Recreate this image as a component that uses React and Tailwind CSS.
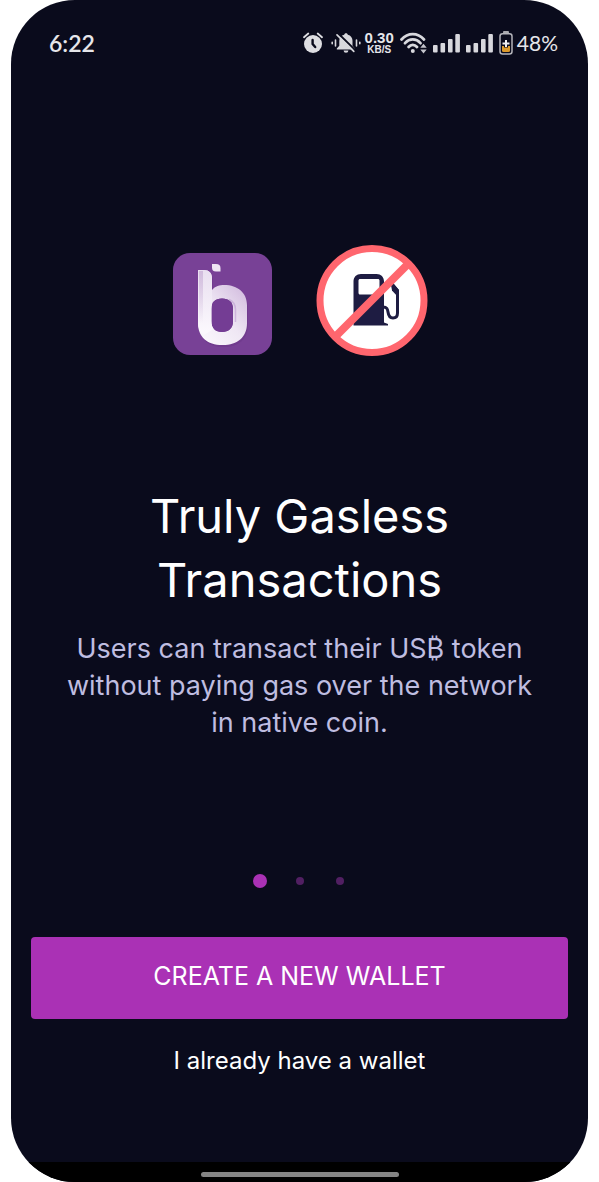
import React from "react";

function AlarmIcon() {
  return (
    <svg className="h-[22px] w-[20px]" viewBox="0 0 20 22" fill="none" aria-hidden="true">
      <circle cx="10" cy="12" r="9" fill="#dedee2" />
      <path d="M1 5.2 5.3 1.5M19 5.2 14.7 1.5" stroke="#dedee2" strokeWidth="1.8" strokeLinecap="round" />
      <path d="M9.600 8v4l2.600 3" stroke="#0a0b1c" strokeWidth="2.4" strokeLinecap="round" strokeLinejoin="round" />
    </svg>
  );
}

function BellOffIcon() {
  return (
    <svg className="h-[22px] w-[30px]" viewBox="0 0 30 22" aria-hidden="true">
      <path
        d="M15 1.2c1 0 1.7.7 1.8 1.6 3 .8 4.7 3 4.7 6v5l2.3 2.6v1.2H5.8v-1.2l2.5-2.6v-5c0-3 1.9-5.200 4.900-6C13.300 1.900 14 1.200 15 1.200zM12.600 18.600h4.800a2.400 2.200 0 0 1-4.800 0z"
        fill="#d8d8dd"
      />
      <path d="M7.500 1.800 24.500 18.400" stroke="#0a0b1c" strokeWidth="2" />
      <path d="M6 2.800 22.800 19.300" stroke="#d8d8dd" strokeWidth="1.700" strokeLinecap="round" />
      <path d="M4.500 8v6M25.500 8v6M1.200 10.300v1.400M28.800 10.300v1.400" stroke="#d8d8dd" strokeWidth="1.600" strokeLinecap="round" />
    </svg>
  );
}

function WifiIcon() {
  return (
    <svg className="h-[22px] w-[27px]" viewBox="0 0 27 22" fill="none" aria-hidden="true">
      <path d="M1.500 7.500C8 .3 17.500.3 24 7.500M5 11.200c4.500-5 11-5 15.500 0M8.600 15c2.400-2.800 6-2.800 8.400 0" stroke="#d8d8dd" strokeWidth="2.700" strokeLinecap="round" />
      <circle cx="12.800" cy="19" r="2" fill="#d8d8dd" />
      <path d="m23.500 11.800 3.200 4h-6.400zM23.500 21.500l3.200-4h-6.400z" fill="#c4c4cb" />
    </svg>
  );
}

function SignalIcon() {
  return (
    <svg className="h-[20px] w-[27px]" viewBox="0 0 27 20" fill="#d8d8dd" aria-hidden="true">
      <rect x="0" y="12" width="4.600" height="7.500" rx="1" />
      <rect x="7.500" y="10" width="4.600" height="9.500" rx="1" />
      <rect x="15" y="6" width="4.600" height="13.500" rx="1" />
      <rect x="22.300" y="1" width="4.600" height="18.500" rx="1" />
    </svg>
  );
}

function BatteryIcon() {
  return (
    <svg className="h-[24px] w-[14px]" viewBox="0 0 14 24" fill="none" aria-hidden="true">
      <rect x="4" y="0" width="6" height="2.500" rx="1" fill="#a9a9af" />
      <rect x="1" y="2.800" width="12" height="20.200" rx="2.500" stroke="#b4b4ba" strokeWidth="1.500" />
      <path d="M3 15h8v4.500a1.500 1.500 0 0 1-1.500 1.500h-5A1.500 1.500 0 0 1 3 19.500z" fill="#dc9a2c" />
      <path d="M7 8.500v8M3.300 12.500h7.400" stroke="#0a0b1c" strokeWidth="4" />
      <path d="M7 9v7M3.500 12.500h7" stroke="#eeeef2" strokeWidth="2" />
    </svg>
  );
}

function StatusBar() {
  return (
    <header className="flex h-[86px] items-center justify-between pl-[38px] pr-[30px] font-['Lato',sans-serif] text-[#e6e6ea]">
      <time className="text-[23px] font-semibold leading-6">6:22</time>
      <div className="flex items-center">
        <AlarmIcon />
        <span className="ml-2"><BellOffIcon /></span>
        <span className="ml-1 flex flex-col items-center font-['Liberation_Sans',sans-serif] font-bold">
          <span className="text-[15px] leading-[13px]">0.30</span>
          <span className="text-[10px] leading-[11px]">KB/S</span>
        </span>
        <span className="ml-1.5"><WifiIcon /></span>
        <span className="ml-1.5"><SignalIcon /></span>
        <span className="ml-1.5"><SignalIcon /></span>
        <span className="ml-1.5"><BatteryIcon /></span>
        <span className="ml-1 text-[21px] leading-6">48%</span>
      </div>
    </header>
  );
}

function WalletLogo() {
  return (
    <svg className="h-[102px] w-[99px]" viewBox="0 0 99 102" role="img" aria-label="Wallet logo">
      <defs>
        <linearGradient id="bowl" x1="25" y1="85" x2="75" y2="40" gradientUnits="userSpaceOnUse">
          <stop offset="0" stopColor="#fbf8fd" />
          <stop offset=".5" stopColor="#efe7f4" />
          <stop offset="1" stopColor="#d3bddf" />
        </linearGradient>
        <linearGradient id="stem" x1="0" y1="17" x2="0" y2="78" gradientUnits="userSpaceOnUse">
          <stop offset="0" stopColor="#e9dff0" />
          <stop offset="1" stopColor="#fbf8fd" />
        </linearGradient>
        <linearGradient id="edge" x1="0" y1="17" x2="0" y2="70" gradientUnits="userSpaceOnUse">
          <stop offset="0" stopColor="#bfa2cf" stopOpacity=".6" />
          <stop offset="1" stopColor="#bfa2cf" stopOpacity="0" />
        </linearGradient>
      </defs>
      <rect width="99" height="102" rx="17" fill="#784196" />
      <path
        d="M25 17h6c5 0 8 3 8 8v12c3-4 8-5 12-5 14 0 23 8 23 20v18c0 14-9 22-24.500 22S25 84 25 70z"
        transform="translate(1 2)"
        fill="#5c2b78"
        opacity=".25"
      />
      <path
        d="M25 17h6c5 0 8 3 8 8v12c3-4 8-5 12-5 14 0 23 8 23 20v18c0 14-9 22-24.500 22S25 84 25 70zM38.500 56v12c0 7.500 4 11 10.500 11S60 75.500 60 68V56c0-7-4-10.500-11-10.500S38.500 49 38.500 56z"
        fill="url(#bowl)"
        fillRule="evenodd"
      />
      <path d="M38.500 56v12c0 7.500 4 11 10.500 11S60 75.500 60 68V56c0-7-4-10.500-11-10.500S38.500 49 38.500 56z" fill="#743d94" />
      <path d="M25 17h6c5 0 8 3 8 8v22l-.5 9v12c0 4 .8 6 2 8l-9.500 6c-4-3-6-7-6-12z" fill="url(#stem)" />
      <path d="M26 18h4v52h-4z" fill="url(#edge)" />
      <path d="M56 46.500c4.500 2 6.500 5 6.500 10V69" fill="none" stroke="#b692cb" strokeWidth="1.500" opacity=".5" />
      <path d="M39 11h4c3 0 4.500 1.500 4.500 4v3.500H43c-3 0-4-1.500-4-4z" fill="#eee5f3" />
    </svg>
  );
}

function NoGasSign() {
  return (
    <svg className="h-[112px] w-[112px]" viewBox="0 0 112 112" role="img" aria-label="No gas fees">
      <circle cx="56" cy="56.500" r="52" fill="#fff" stroke="#ff666e" strokeWidth="7" />
      <path
        d="M37.500 81.500V37.500c0-4.500 3-7.500 7.500-7.500h15.500c4.500 0 7.500 3 7.500 7.500v41l4 1.500v1.500zM42.500 36.500v12.500c0 .8.700 1.500 1.500 1.500h18c.800 0 1.500-.7 1.500-1.500V36.500c0-.8-.7-1.500-1.500-1.500H44c-.8 0-1.500.7-1.500 1.500z"
        fill="#1e1c42"
        fillRule="evenodd"
      />
      <path d="M67 63c4 0 4.500 2 5 5 .6 4.500 2.500 6 5 6 3 0 4.500-2 4.500-5V46.500L73 36.500" fill="none" stroke="#1e1c42" strokeWidth="3" />
      <path d="m74 35.500 8.500 10v8L76 46.500z" fill="#1e1c42" />
      <path d="M21 91 91.500 20.500" stroke="#ff666e" strokeWidth="8" />
    </svg>
  );
}

function SlideDot({ label, active }) {
  return (
    <button type="button" aria-label={label} aria-current={active} className="flex size-[14px] items-center justify-center">
      <span className={active ? "size-[14px] rounded-full bg-[#aa31b5]" : "size-2 rounded-full bg-[#511f62]"} />
    </button>
  );
}

export default function App() {
  return (
    <div className="min-h-screen bg-white px-[11px]">
      <div className="flex min-h-screen flex-col overflow-hidden rounded-[64px] bg-[#0a0b1c] font-['Inter',sans-serif] text-white">
        <StatusBar />
        <main className="flex grow flex-col px-5 pt-[158px] text-center">
          <div className="flex items-center justify-center gap-11 pl-0.5">
            <span className="pt-2"><WalletLogo /></span>
            <NoGasSign />
          </div>
          <h1 className="mx-auto mt-32 max-w-[360px] text-[47px] leading-[64px]">Truly Gasless Transactions</h1>
          <p className="mx-auto mt-[18px] max-w-[484px] text-[27px] leading-[37px] text-[#bfbde0]">
            Users can transact their US₿ token without paying gas over the network in native coin.
          </p>
          <nav className="mt-[132px] flex h-4 items-center justify-center gap-[26px]" aria-label="Introduction slides">
            <SlideDot label="Slide 1" active />
            <SlideDot label="Slide 2" />
            <SlideDot label="Slide 3" />
          </nav>
          <button type="button" className="mt-12 h-[82px] w-full rounded bg-[#aa31b5] pb-1 text-[25px] leading-8">
            CREATE A NEW WALLET
          </button>
          <a href="#import" className="mx-auto mt-[26px] text-[24px] leading-8">I already have a wallet</a>
        </main>
        <footer className="flex h-5 items-center justify-center bg-black pt-1">
          <div className="h-[5px] w-[198px] rounded-full bg-[#858585]" />
        </footer>
      </div>
    </div>
  );
}
